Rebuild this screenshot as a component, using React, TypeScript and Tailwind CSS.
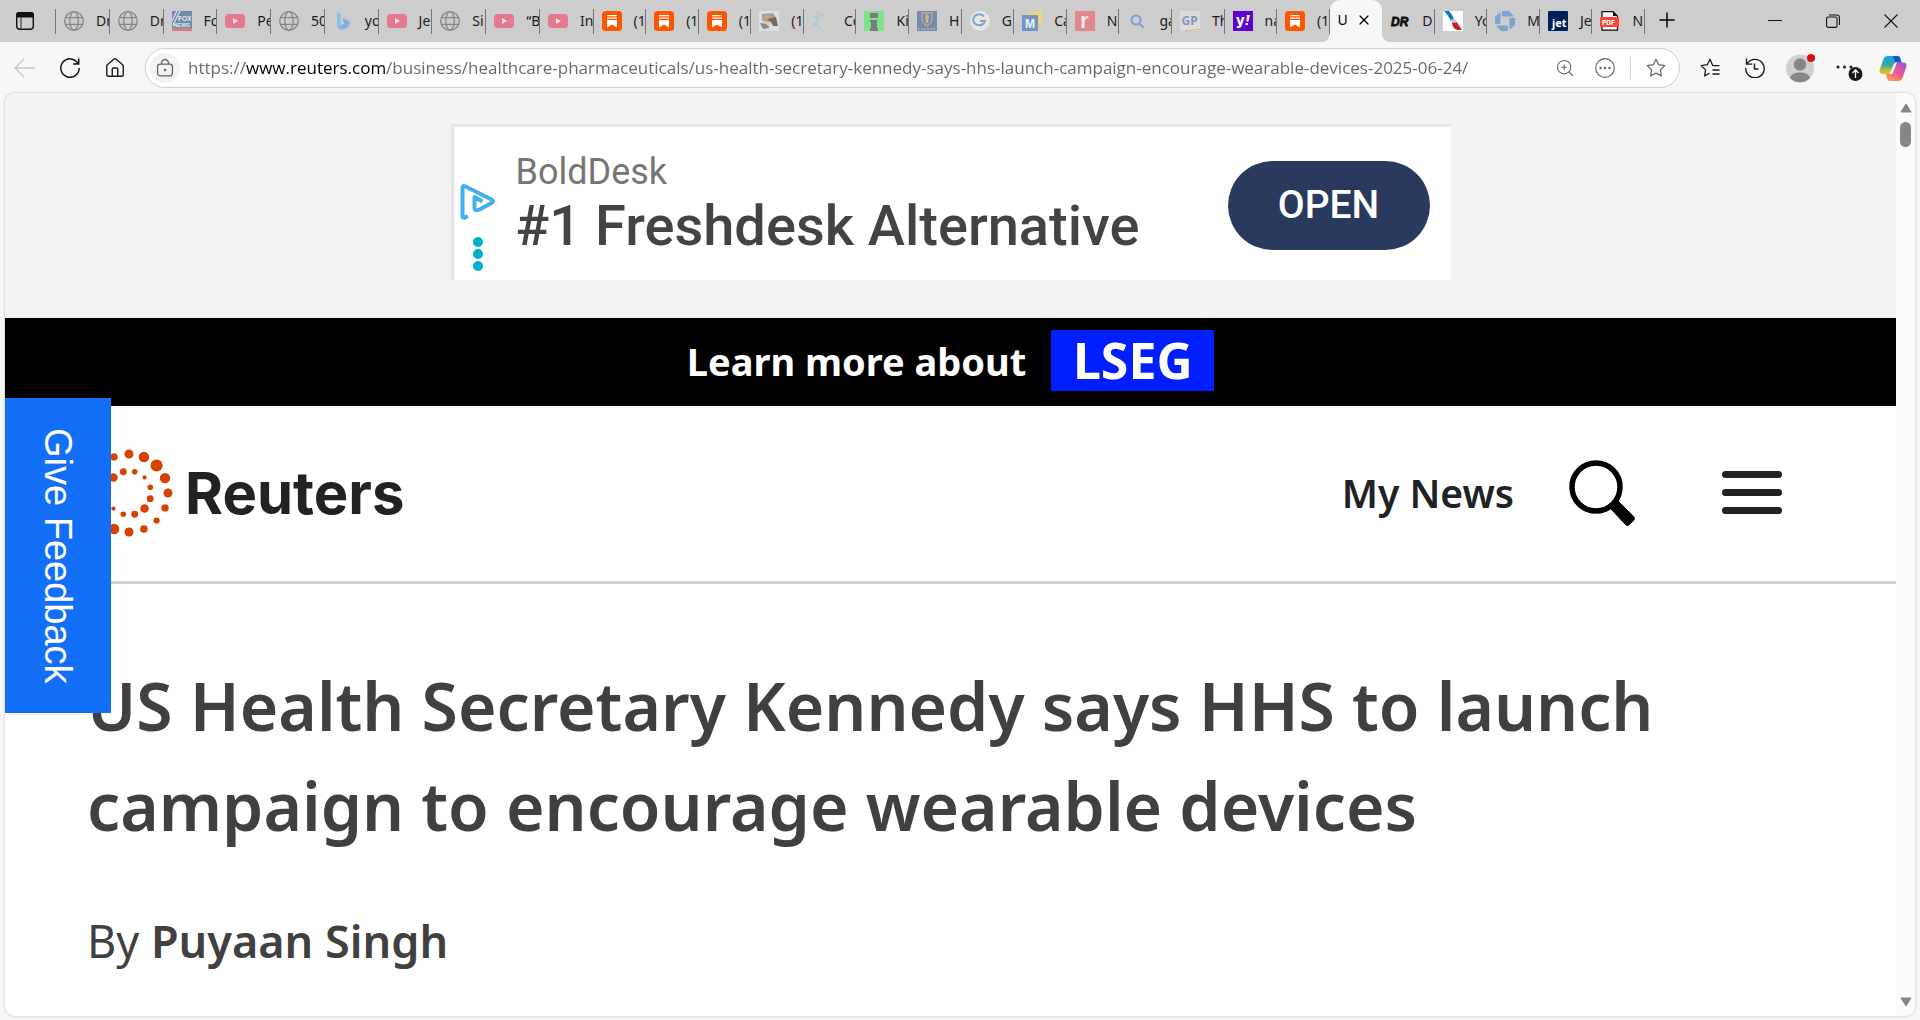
import type { ReactNode } from 'react';
import { House, Plus, X, ZoomIn } from 'lucide-react';

type TabKind =
  | 'globe' | 'fox' | 'youtube' | 'bing' | 'substack' | 'photo' | 'runner' | 'green' | 'crest'
  | 'google' | 'm' | 'r' | 'search' | 'gp' | 'yahoo' | 'dr' | 'aa' | 'chase' | 'jet' | 'pdf';

interface TabInfo {
  icon: TabKind;
  title: string;
}

const wideTabs: TabInfo[] = [
  { icon: 'globe', title: 'Dr' },
  { icon: 'globe', title: 'Dr' },
  { icon: 'fox', title: 'Fo' },
  { icon: 'youtube', title: 'Pe' },
  { icon: 'globe', title: '50' },
  { icon: 'bing', title: 'yo' },
  { icon: 'youtube', title: 'Je' },
  { icon: 'globe', title: 'Si' },
  { icon: 'youtube', title: '“B' },
  { icon: 'youtube', title: 'In' },
];

const narrowTabs: TabInfo[] = [
  { icon: 'substack', title: '(1' },
  { icon: 'substack', title: '(1' },
  { icon: 'substack', title: '(1' },
  { icon: 'photo', title: '(1' },
  { icon: 'runner', title: 'Co' },
  { icon: 'green', title: 'Ki' },
  { icon: 'crest', title: 'H' },
  { icon: 'google', title: 'G' },
  { icon: 'm', title: 'Ca' },
  { icon: 'r', title: 'N' },
  { icon: 'search', title: 'ga' },
  { icon: 'gp', title: 'Th' },
  { icon: 'yahoo', title: 'na' },
  { icon: 'substack', title: '(1' },
];

const lastTabs: TabInfo[] = [
  { icon: 'dr', title: 'D' },
  { icon: 'aa', title: 'Yo' },
  { icon: 'chase', title: 'M' },
  { icon: 'jet', title: 'Je' },
  { icon: 'pdf', title: 'N' },
];

const Svg = ({ children }: { children: ReactNode }) => (
  <svg viewBox="0 0 20 20" className="size-5" aria-hidden="true">{children}</svg>
);

const favicons: Record<TabKind, ReactNode> = {
  globe: (
    <Svg>
      <g fill="none" stroke="#868686" strokeWidth="1.3">
        <circle cx="10" cy="10" r="9.3" />
        <ellipse cx="10" cy="10" rx="4.2" ry="9.3" />
        <path d="M1.6 6.6h16.8M1.6 13.4h16.8" />
      </g>
    </Svg>
  ),
  fox: (
    <Svg>
      <rect width="20" height="17" fill="#7488a8" />
      <rect y="17" width="20" height="3" fill="#cf7f7c" />
      <path d="M1 14L8 0M0 10L5 0" stroke="#dfe3ea" strokeWidth="1.2" />
      <text x="6" y="9.5" fontSize="6.5" fontWeight="800" fill="#e8ebf0" fontFamily="Liberation Sans">FOX</text>
      <text x="1.5" y="16" fontSize="5.5" fontWeight="800" fill="#e8ebf0" fontFamily="Liberation Sans">NEWS</text>
    </Svg>
  ),
  youtube: (
    <Svg>
      <rect y="3" width="20" height="14" rx="3.5" fill="#e5798f" />
      <path d="M8 7.2v5.6l5-2.8z" fill="#f6e4e8" />
    </Svg>
  ),
  bing: (
    <Svg>
      <path d="M4 1l3.600 1.400v11L4 16z" fill="#86bfe6" />
      <path d="M9 6.500l7 3.500c2.400 3.600-1 6.500-4 7.700L8 19l-4-3 7-3.600z" fill="#7fb0e8" />
    </Svg>
  ),
  substack: (
    <Svg>
      <rect width="20" height="20" rx="3.500" fill="#ff5500" />
      <path d="M5 4.600h10M5 7.200h10" stroke="#fff" strokeWidth="1.300" />
      <path d="M5 9h10v7.500l-5-3-5 3z" fill="#fff" />
    </Svg>
  ),
  photo: (
    <Svg>
      <rect width="20" height="20" fill="#dedede" />
      <path d="M3 3l11-1 3 5 1 5-8-1-7-1z" fill="#a9a08f" />
      <path d="M6 4l6 1-1 3-5-1z" fill="#e3a15d" />
      <path d="M8 8l9-2 2 9h-5l-2-4z" fill="#6f6b68" />
      <path d="M1 12l8 1 1 4-6 1z" fill="#8d8781" />
      <path d="M4 11l8 1-3 3z" fill="#d9c2ae" />
    </Svg>
  ),
  runner: (
    <Svg>
      <circle cx="6" cy="2.500" r="1.500" fill="#a9c8da" />
      <path d="M1 6c4 0 7 0 10-3M4 7c2 3 0 6-2 7 3 1 5 1 7 4" fill="none" stroke="#a9c8da" strokeWidth="1.300" />
    </Svg>
  ),
  green: (
    <Svg>
      <rect width="20" height="20" fill="#7ee28b" />
      <path d="M6 2h8v5H6zM6 9h7v8h1v3H6v-3h1v-6H6z" fill="#7b7b7b" />
    </Svg>
  ),
  crest: (
    <Svg>
      <rect width="20" height="20" fill="#7a8aaa" />
      <path d="M5 2h10v6c0 4-3 5-5 7-2-2-5-3-5-7z" fill="none" stroke="#b9ad8d" strokeWidth="1.300" />
      <path d="M8 5l2-2 2 2-1 7h-2z" fill="#c5b78f" />
      <path d="M1 18h18" stroke="#a6b0c6" strokeWidth="1.500" strokeDasharray="2 1" />
    </Svg>
  ),
  google: (
    <Svg>
      <circle cx="10" cy="10" r="10" fill="#e6e6e6" />
      <path d="M14 5.500a6 5.500 0 1 0 1 4.500h-5" fill="none" stroke="#7fa3cc" strokeWidth="2" />
    </Svg>
  ),
  m: (
    <Svg>
      <rect x="8" width="12" height="13" fill="#e7d77d" />
      <rect y="4" width="16" height="16" fill="#7596c4" />
      <text x="3" y="16.500" fontSize="12" fontWeight="700" fill="#eef2f7" fontFamily="Liberation Sans">M</text>
    </Svg>
  ),
  r: (
    <Svg>
      <rect width="20" height="20" fill="#e0888c" />
      <text x="5" y="16.500" fontSize="22" fontWeight="700" fill="#f6e6e7" fontFamily="Liberation Sans">r</text>
    </Svg>
  ),
  search: (
    <Svg>
      <circle cx="9" cy="9" r="4.500" fill="none" stroke="#7b9fd0" strokeWidth="2" />
      <path d="M12.500 12.500l4 4" stroke="#7b9fd0" strokeWidth="2" />
    </Svg>
  ),
  gp: (
    <Svg>
      <rect width="20" height="20" fill="#dcdcdc" />
      <text x="1.500" y="14" fontSize="12" fontWeight="700" fill="#8298b3" fontFamily="Noto Sans">GP</text>
      <path d="M5 19.500l15-1" stroke="#dcb76e" strokeWidth="1" />
    </Svg>
  ),
  yahoo: (
    <Svg>
      <rect width="20" height="20" fill="#5f01d1" />
      <text x="3" y="14" fontSize="14" fontWeight="800" fill="#fff" fontFamily="Inter">y</text>
      <path d="M14 4h3l-1.600 6.500h-2zM12.500 12h2.300v2h-2.300z" fill="#fff" />
    </Svg>
  ),
  dr: (
    <Svg>
      <text x="1" y="15" fontSize="12" fontWeight="800" fontStyle="italic" fill="#111" stroke="#111" strokeWidth="0.800" fontFamily="Liberation Sans">DR</text>
    </Svg>
  ),
  aa: (
    <Svg>
      <rect width="20" height="20" fill="#fff" />
      <path d="M1 0h5c2 2 4 5 5 9l-3 1C6 6 4 3 1 0z" fill="#1177c8" />
      <path d="M8 8l5 1 2 3-6 1z" fill="#c3ccd5" />
      <path d="M9 12l5-.500 5 7.500h-5c-3-1-5-4-5-7z" fill="#c5202c" />
    </Svg>
  ),
  chase: (
    <Svg>
      <g fill="#7fa3cf">
        <path d="M7 0h7l5 5.500H7z" />
        <path d="M20 7v7l-5.500 5V7z" />
        <path d="M13 20H6l-5-5.500h12z" />
        <path d="M0 13V6l5.500-5v12z" />
      </g>
    </Svg>
  ),
  jet: (
    <Svg>
      <rect width="20" height="20" rx="1" fill="#00205b" />
      <text x="4" y="16" fontSize="11" fontWeight="700" fill="#fff" fontFamily="Noto Sans">jet</text>
    </Svg>
  ),
  pdf: (
    <Svg>
      <path d="M2 .700h11l4.500 4.500v14H2z" fill="#f7f7f7" stroke="#111" strokeWidth="1.200" />
      <path d="M13 0l5 5h-5z" fill="#111" />
      <rect y="6" width="19" height="10" rx="1" fill="#ff4238" />
      <text x="2" y="13.500" fontSize="6.500" fontWeight="800" fill="#fff" fontFamily="Inter">PDF</text>
    </Svg>
  ),
};

const Tab = ({ icon, title }: TabInfo) => (
  <button type="button" className="flex h-[25px] min-w-0 flex-1 items-center overflow-hidden border-r border-[#757575] pb-[2px] pl-2">
    <span className="size-5 shrink-0">{favicons[icon]}</span>
    <span className="ml-3 text-[14px] leading-5 whitespace-nowrap text-[#1b1b1b]">{title}</span>
  </button>
);

const TabStrip = () => (
  <div className="flex h-[42px] shrink-0 items-start bg-[#cdcdcd]">
    <button type="button" aria-label="Tab actions" className="mt-[9px] flex h-[25px] w-14 shrink-0 items-center border-r border-[#757575] pb-[2px] pl-4">
      <svg viewBox="0 0 18 18" className="size-[18px]" aria-hidden="true">
        <rect x="0.700" y="0.700" width="16.600" height="16.600" rx="3" fill="none" stroke="#111" strokeWidth="1.400" />
        <path d="M0 5.500V3a3 3 0 0 1 3-3h12a3 3 0 0 1 3 3v2.500z" fill="#111" />
        <path d="M5 5v12" stroke="#444" strokeWidth="1.200" />
      </svg>
    </button>
    <div className="mt-[9px] flex w-[28%] shrink-0">
      {wideTabs.map((tab, i) => <Tab key={i} {...tab} />)}
    </div>
    <div className="flex min-w-0 flex-1 items-start">
      <div className="mt-[9px] flex min-w-0 flex-[14]">
        {narrowTabs.map((tab, i) => <Tab key={i} {...tab} />)}
      </div>
      <div className="relative min-w-0 flex-1">
        <div className="flex h-[42px] items-center rounded-t-[10px] bg-[#f7f7f7] pb-[2px] pl-2">
          <span className="w-4 text-[14px] leading-5">U</span>
          <button type="button" aria-label="Close tab" className="ml-[2px]">
            <X className="size-4" strokeWidth={1.8} />
          </button>
        </div>
        <svg viewBox="0 0 8 8" className="absolute bottom-0 -left-2 size-2" aria-hidden="true">
          <path d="M8 0v8H0a8 8 0 0 0 8-8z" fill="#f7f7f7" />
        </svg>
        <svg viewBox="0 0 8 8" className="absolute -right-2 bottom-0 size-2" aria-hidden="true">
          <path d="M0 0v8h8a8 8 0 0 1-8-8z" fill="#f7f7f7" />
        </svg>
      </div>
      <div className="mt-[9px] flex min-w-0 flex-[5]">
        {lastTabs.map((tab, i) => <Tab key={i} {...tab} />)}
      </div>
    </div>
    <div className="flex h-10 w-[275px] shrink-0 items-center pl-[10px]">
      <button type="button" aria-label="New tab">
        <Plus className="size-6" strokeWidth={1.5} />
      </button>
      <div className="mt-[2px] ml-auto flex gap-11 pr-[22px]">
        <button type="button" aria-label="Minimize">
          <svg viewBox="0 0 14 14" className="size-[14px]" aria-hidden="true"><path d="M0 6.500h14" stroke="#111" /></svg>
        </button>
        <button type="button" aria-label="Restore">
          <svg viewBox="0 0 14 14" className="size-[14px]" aria-hidden="true">
            <rect x="0.600" y="3" width="10.400" height="10.400" rx="1.500" fill="none" stroke="#111" strokeWidth="1.100" />
            <path d="M3 1h8a2.400 2.400 0 0 1 2.400 2.400V11" fill="none" stroke="#111" strokeWidth="1.100" />
          </svg>
        </button>
        <button type="button" aria-label="Close window">
          <svg viewBox="0 0 14 14" className="size-[14px]" aria-hidden="true"><path d="M.500.500l13 13M13.500.500l-13 13" stroke="#111" strokeWidth="1.100" /></svg>
        </button>
      </div>
    </div>
  </div>
);

const starPath = 'M10 1.200l2.700 5.500 6.100.900-4.400 4.300 1 6-5.400-2.800-5.400 2.800 1-6L1.200 7.600l6.100-.900z';

const Toolbar = () => (
  <div className="flex h-[50px] shrink-0 items-center bg-[#f7f7f7] pt-[2px]">
    <div className="flex w-[145px] shrink-0 items-center gap-6 pl-[14px]">
      <button type="button" aria-label="Back">
        <svg viewBox="0 0 22 20" className="h-5 w-[22px]" aria-hidden="true">
          <path d="M21 10H1M10 1L1 10l9 9" fill="none" stroke="#c6c6c6" strokeWidth="1.300" />
        </svg>
      </button>
      <button type="button" aria-label="Refresh">
        <svg viewBox="0 0 20 20" className="size-5" aria-hidden="true">
          <path d="M18 5.500A9.200 9.200 0 1 0 19.200 10M18.700.500V6h-5.500" fill="none" stroke="#111" strokeWidth="1.500" />
        </svg>
      </button>
      <button type="button" aria-label="Home">
        <House className="size-[22px]" strokeWidth={1.5} color="#1b1b1b" />
      </button>
    </div>
    <form className="flex h-10 min-w-0 flex-1 items-center rounded-full border border-[#cfcfcf] bg-white pr-[13px] pl-1" onSubmit={(e) => e.preventDefault()}>
      <button type="button" aria-label="Site information" className="flex size-[30px] shrink-0 items-center justify-center rounded-full bg-[#f3f3f3]">
        <svg viewBox="0 0 18 18" className="size-[18px]" aria-hidden="true">
          <rect x="1.600" y="5.200" width="14.800" height="11.600" rx="2.500" fill="none" stroke="#666" strokeWidth="1.300" />
          <path d="M5.500 5V4a3.500 3.500 0 0 1 7 0v1" fill="none" stroke="#666" strokeWidth="1.300" />
          <circle cx="9" cy="11" r="1.300" fill="#666" />
        </svg>
      </button>
      {/* the gradient darkens only the host part of the address */}
      <input
        type="text"
        aria-label="Address"
        defaultValue="https://www.reuters.com/business/healthcare-pharmaceuticals/us-health-secretary-kennedy-says-hhs-launch-campaign-encourage-wearable-devices-2025-06-24/"
        className="ml-2 min-w-0 flex-1 bg-[linear-gradient(90deg,#666_57px,#000_57px,#000_198px,#666_198px)] bg-clip-text font-['Open_Sans'] text-[17px] leading-6 text-transparent outline-none"
      />
      <div className="flex shrink-0 items-center gap-5">
        <button type="button" aria-label="Zoom"><ZoomIn className="size-5" strokeWidth={1.3} color="#666" /></button>
        <div className="flex items-center gap-[15px]">
          <button type="button" aria-label="More page actions">
            <svg viewBox="0 0 20 20" className="size-5" aria-hidden="true">
              <circle cx="10" cy="10" r="9.300" fill="none" stroke="#666" strokeWidth="1.200" />
              <g fill="#666"><circle cx="5.500" cy="10" r="1.200" /><circle cx="10" cy="10" r="1.200" /><circle cx="14.500" cy="10" r="1.200" /></g>
            </svg>
          </button>
          <span className="h-[22px] w-px bg-[#d0d0d0]" />
          <button type="button" aria-label="Add to favorites">
            <svg viewBox="0 0 20 20" className="size-5" aria-hidden="true">
              <path d={starPath} fill="none" stroke="#666" strokeWidth="1.200" strokeLinejoin="round" />
            </svg>
          </button>
        </div>
      </div>
    </form>
    <div className="flex w-60 shrink-0 items-center pl-5">
      <button type="button" aria-label="Favorites">
        <svg viewBox="0 0 20 20" className="size-5" aria-hidden="true">
          <path d="M19.500 7.600h-6.800L10 1.200 7.300 6.700l-6.100.900 4.400 4.300-1 6 5-2.700M12.500 12h7M12.500 16h7" fill="none" stroke="#1b1b1b" strokeWidth="1.300" strokeLinejoin="round" />
        </svg>
      </button>
      <button type="button" aria-label="History" className="ml-[25px]">
        <svg viewBox="0 0 20 20" className="size-5" aria-hidden="true">
          <path d="M1.500.500v5.600h5.800M2 6a9.200 9.200 0 1 1-1.200 4M9.500 5.500v5.500h4" fill="none" stroke="#1b1b1b" strokeWidth="1.400" />
        </svg>
      </button>
      <button type="button" aria-label="Profile" className="ml-5">
        <svg viewBox="0 0 30 30" className="size-[30px]" aria-hidden="true">
          <circle cx="15" cy="15.500" r="14" fill="#d2d0ce" />
          <circle cx="15" cy="11.500" r="6.200" fill="#868686" />
          <path d="M5 25c1-4 5-5.500 10-5.500S24 21 25 25a14 14 0 0 1-20 0z" fill="#868686" />
          <circle cx="26" cy="5" r="4" fill="#d50f10" />
        </svg>
      </button>
      <button type="button" aria-label="Settings and more" className="ml-5">
        <svg viewBox="0 0 28 28" className="size-7" aria-hidden="true">
          <g fill="#1b1b1b"><circle cx="3" cy="13" r="1.500" /><circle cx="9.500" cy="13" r="1.500" /><circle cx="16" cy="13" r="1.500" /></g>
          <circle cx="20.500" cy="20" r="7" fill="#1b1b1b" />
          <path d="M20.500 24v-7.500M17.500 19l3-3 3 3" fill="none" stroke="#fff" strokeWidth="1.300" />
        </svg>
      </button>
      <button type="button" aria-label="Copilot" className="ml-4">
        <svg viewBox="0 0 28 28" className="size-7" aria-hidden="true">
          <defs>
            <linearGradient id="cpA" x1="0" y1="0" x2="0" y2="1">
              <stop offset="0" stopColor="#12a5ea" /><stop offset="0.500" stopColor="#35a8a0" /><stop offset="0.750" stopColor="#a5c23c" /><stop offset="1" stopColor="#f4b921" />
            </linearGradient>
            <linearGradient id="cpB" x1="0.800" y1="0" x2="0.200" y2="1">
              <stop offset="0" stopColor="#a24fe0" /><stop offset="0.500" stopColor="#ec5a92" /><stop offset="1" stopColor="#ff9a4c" />
            </linearGradient>
          </defs>
          <path d="M9 2h9c2 0 3 1 3.500 3l1 3.500h-4c-2 0-3 1-3.500 3l-2 6c-.500 2-1.500 2.500-3.500 2.500H4c-3 0-4-2-3.300-4.500L4.500 5C5.300 3 6.500 2 9 2z" fill="url(#cpA)" />
          <path d="M14 2h4c2 0 3 1 3.500 3l1 3.500h-4c-2 0-3-1-3.500-3z" fill="#1c50c9" />
          <path d="M19 27h-8c-2 0-2.500-1-3-3l-1-4h3c2 0 3-.500 3.500-2.500l2-6c.500-2 1.500-3 3.500-3h5c3 0 4 2 3.300 4.500L23.500 24c-.800 2-2 3-4.500 3z" fill="url(#cpB)" />
          <path d="M14.500 11c.600-1.700 1.600-2.500 3.500-2.500l-4 10c-.500 1.200-1.500 2-3.500 1.500z" fill="#f7f7f7" />
        </svg>
      </button>
    </div>
  </div>
);

const AdBanner = () => (
  <div className="flex h-[225px] shrink-0 justify-center bg-[#f3f3f3] pt-[31px]">
    <div className="flex h-[156px] w-[1000px] items-center border-t-[3px] border-l-[3px] border-[#e6e6e6] bg-white pt-1 pr-[21px] pl-[6px]">
      <div className="flex w-9 flex-col items-center gap-4 pt-[42px]">
        <a href="#adchoices" aria-label="AdChoices">
          <svg viewBox="0 0 36 38" className="h-[38px] w-9" aria-hidden="true">
            <path d="M8 33l-3 1.500c-2 .500-2.500 0-2.500-2V5c0-2 1-2.500 3-1.500l26 13c2 1 2 2.500 0 3.500l-12 6.500c-3 1.500-5 1-5-2V14l8 4.500" fill="none" stroke="#45aeee" strokeWidth="4" strokeLinejoin="round" />
          </svg>
        </a>
        <button type="button" aria-label="Ad options" className="flex flex-col gap-[2px]">
          <span className="size-[10px] rounded-full bg-[#00aecd]" />
          <span className="size-[10px] rounded-full bg-[#00aecd]" />
          <span className="size-[10px] rounded-full bg-[#00aecd]" />
        </button>
      </div>
      <div className="ml-5 font-['Roboto']">
        <p className="text-[36px] leading-10 text-[#757575]">BoldDesk</p>
        <p className="text-[56px] leading-[68px] font-medium text-[#434343]">#1 Freshdesk Alternative</p>
      </div>
      <button type="button" className="ml-auto h-[89px] w-[202px] rounded-full bg-[#2a3a5e] font-['Roboto'] text-[39px] font-medium text-white">
        OPEN
      </button>
    </div>
  </div>
);

// [angle in degrees from the top, dot radius]
const outerDots = [
  [0, 4.5], [22.5, 5.2], [45, 6], [67.5, 5.2], [90, 4.5], [112.5, 3.7], [135, 3.1], [157.5, 3.8],
  [180, 4.5], [202.5, 5.2], [225, 6], [247.5, 5.2], [270, 4.5], [292.5, 3.7], [315, 3.1], [337.5, 3.6],
];
const innerDots = [
  [15, 2.8], [45, 2.1], [75, 2.8], [105, 3.4], [135, 4.3], [165, 3.4],
  [195, 2.8], [225, 2.1], [255, 2.8], [285, 3.4], [315, 4.3], [345, 3.4],
];

const polar = (angle: number, radius: number) => {
  const a = (angle * Math.PI) / 180;
  return { cx: 44 + radius * Math.sin(a), cy: 44 - radius * Math.cos(a) };
};

const ReutersMark = () => (
  <svg viewBox="0 0 88 88" className="size-[88px]" aria-hidden="true">
    <g fill="#d64000">
      {outerDots.map(([angle, r]) => <circle key={angle} {...polar(angle, 39)} r={r} />)}
      {innerDots.map(([angle, r]) => <circle key={angle} {...polar(angle, 22)} r={r} />)}
    </g>
  </svg>
);

const SiteHeader = () => (
  <header className="flex h-[178px] shrink-0 items-center border-b-[3px] border-[#d0d0d0] pr-[114px] pb-[2px] pl-20">
    <a href="#home" className="flex items-center gap-3">
      <ReutersMark />
      <span className="font-['Inter'] text-[58px] leading-[64px] font-bold text-[#212223]">Reuters</span>
    </a>
    <nav className="ml-auto flex items-center">
      <a href="#my-news" className="text-[39px] leading-[48px] font-semibold text-[#212223]">My News</a>
      <button type="button" aria-label="Search" className="ml-[54px]">
        <svg viewBox="0 0 68 68" className="size-[68px]" aria-hidden="true">
          <circle cx="28" cy="28" r="24" fill="none" stroke="#000" strokeWidth="5.500" />
          <path d="M43 50l7-8 15 15c2 2 2 3 0 5l-3 3c-2 2-3 2-5 0z" fill="#000" stroke="#000" strokeWidth="1" />
        </svg>
      </button>
      <button type="button" aria-label="Menu" className="ml-[86px] flex w-[60px] flex-col gap-[11px]">
        <span className="h-[7px] rounded-full bg-[#212223]" />
        <span className="h-[7px] rounded-full bg-[#212223]" />
        <span className="h-[7px] rounded-full bg-[#212223]" />
      </button>
    </nav>
  </header>
);

const Scrollbar = () => (
  <div className="flex w-[19px] shrink-0 flex-col items-center bg-[#fbfbfb] pt-[10px] pb-[9px]">
    <svg viewBox="0 0 12 10" className="h-[10px] w-3" aria-hidden="true"><path d="M6 1l5 8H1z" fill="#868686" stroke="#868686" strokeLinejoin="round" /></svg>
    <div className="mt-[9px] h-[25px] w-[11px] rounded-full bg-[#868686]" />
    <svg viewBox="0 0 12 10" className="mt-auto h-[10px] w-3" aria-hidden="true"><path d="M6 9l5-8H1z" fill="#868686" stroke="#868686" strokeLinejoin="round" /></svg>
  </div>
);

export default function App() {
  return (
    <div className="flex h-screen flex-col overflow-hidden bg-[#f7f7f7] font-['Noto_Sans',sans-serif]">
      <TabStrip />
      <Toolbar />
      <div className="mx-[5px] mt-px mb-1 flex min-h-0 flex-1 overflow-hidden rounded-[10px] bg-white shadow-[0_0_2px_1px_#dcdcdc]">
        <div className="relative flex min-w-0 flex-1 flex-col">
          <AdBanner />
          <a href="#lseg" className="flex h-[88px] shrink-0 items-center justify-center gap-[25px] bg-black pb-[3px] text-white">
            <span className="text-[38px] leading-[48px] font-bold">Learn more about</span>
            <span className="flex h-[61px] w-[163px] items-center justify-center bg-[#001eff] text-[50px] font-bold">LSEG</span>
          </a>
          <SiteHeader />
          <main className="px-[82px] pt-[71px] text-[#404040]">
            <h1 className="text-[66px] leading-[100px] font-semibold">
              US Health Secretary Kennedy says HHS to launch campaign to encourage wearable devices
            </h1>
            <p className="mt-[54px] text-[45px] leading-[64px]">
              By <a href="#author" className="font-semibold">Puyaan Singh</a>
            </p>
          </main>
          <button type="button" className="absolute top-[305px] left-0 flex h-[315px] w-[106px] items-center justify-center bg-[#136ef8] pr-[2px] font-['Liberation_Sans'] text-[38px] text-white [writing-mode:vertical-rl]">
            Give Feedback
          </button>
        </div>
        <Scrollbar />
      </div>
    </div>
  );
}
